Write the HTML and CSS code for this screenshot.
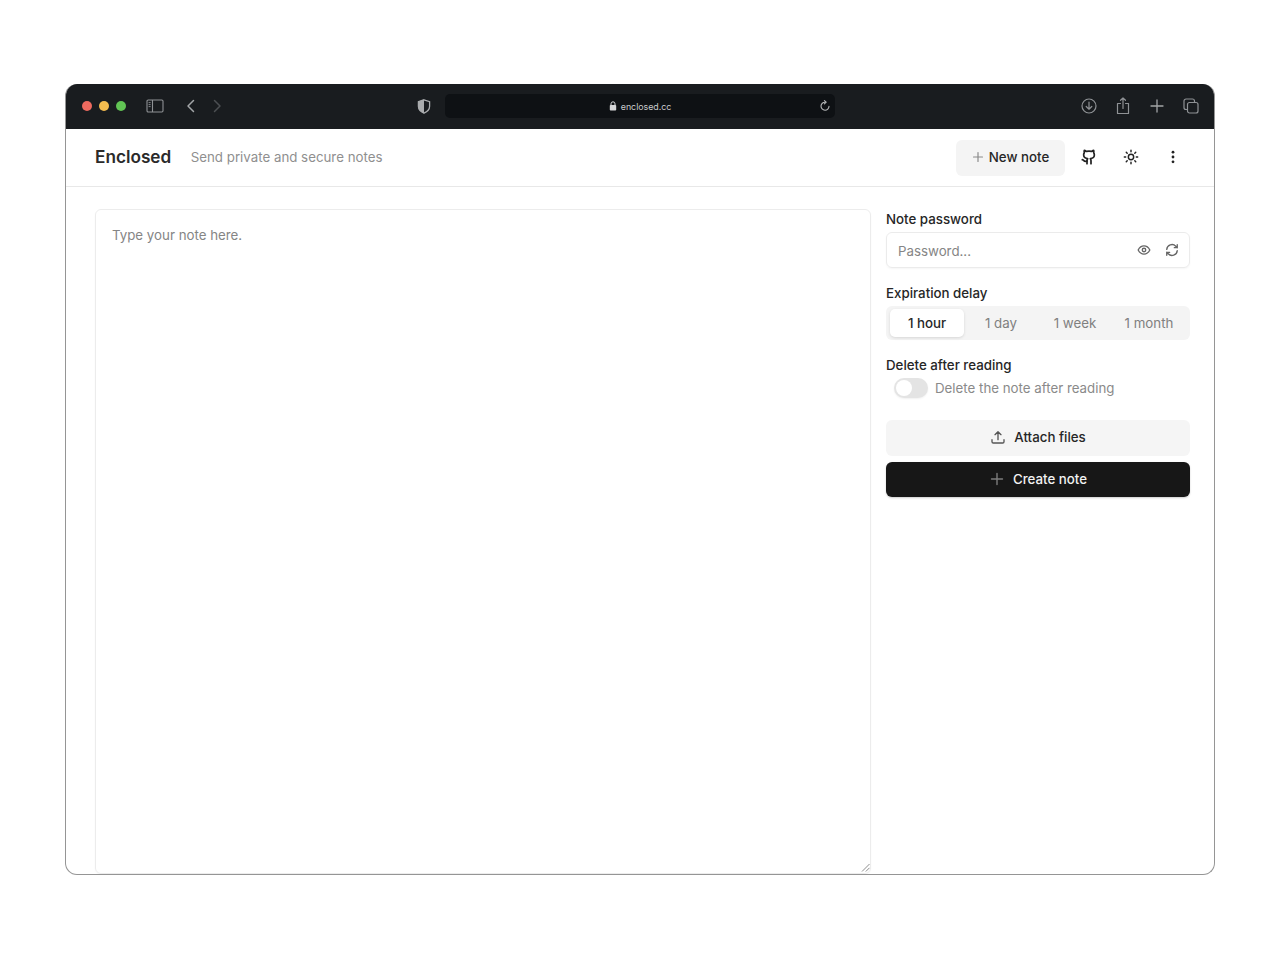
FILE: index.html
```html
<!DOCTYPE html>
<html lang="en">
<head>
<meta charset="utf-8">
<title>Enclosed</title>
<link rel="stylesheet" href="styles.css">
</head>
<body>
<div class="window">
  <div class="chrome">
    <div class="lights"><span class="light red"></span><span class="light yellow"></span><span class="light green"></span></div>
    <svg class="ci sidebar-ic" width="18" height="14" viewBox="0 0 18 14" fill="none" stroke="#8f9295" stroke-width="1.1"><rect x="1" y="1" width="16" height="12" rx="1.2"/><path d="M6.5 1v12"/><path d="M2.6 3.6h2M2.6 5.6h2M2.6 7.6h2" stroke-width=".9"/></svg>
    <svg class="ci back-ic" width="10" height="14" viewBox="0 0 10 14" fill="none" stroke="#a2a5a7" stroke-width="1.5" stroke-linecap="round" stroke-linejoin="round"><path d="M7.5 1.5 2 7l5.5 5.5"/></svg>
    <svg class="ci fwd-ic" width="10" height="14" viewBox="0 0 10 14" fill="none" stroke="#4c4f52" stroke-width="1.5" stroke-linecap="round" stroke-linejoin="round"><path d="M2.5 1.5 8 7l-5.5 5.5"/></svg>
    <svg class="ci shield-ic" width="14" height="15" viewBox="0 0 14 15"><path d="M7 .8 12.6 2.6v4.6c0 3.2-2.3 5.500-5.600 7C3.700 12.700 1.400 10.400 1.400 7.200V2.600z" fill="none" stroke="#a9abad" stroke-width="1.300"/><path d="M7 .8 1.400 2.600v4.600c0 3.200 2.300 5.500 5.600 7z" fill="#a9abad"/></svg>
    <div class="address">
      <span class="addr-center">
        <svg width="8" height="10" viewBox="0 0 8 10"><path d="M2 4.200V2.800a2 2 0 0 1 4 0v1.400" fill="none" stroke="#d6d7d8" stroke-width="1"/><rect x=".8" y="4" width="6.400" height="5.500" rx=".8" fill="#d6d7d8"/></svg>
        <span class="url">enclosed.cc</span>
      </span>
      <svg class="reload" width="12" height="12" viewBox="0 0 12 12" fill="none" stroke="#b5b7b8" stroke-width="1.100" stroke-linecap="round" stroke-linejoin="round"><path d="M6.200 2.200A4 4 0 1 0 10 6.200"/><path d="M5.400.6 7.200 2.200 5.400 3.800"/></svg>
    </div>
    <div class="chrome-right">
      <svg width="16" height="16" viewBox="0 0 16 16" fill="none" stroke="#8f9295" stroke-width="1.200" stroke-linecap="round" stroke-linejoin="round"><circle cx="8" cy="8" r="7"/><path d="M8 4v7M5.200 8.500 8 11.200l2.800-2.700"/></svg>
      <svg width="14" height="18" viewBox="0 0 14 18" fill="none" stroke="#8f9295" stroke-width="1.200" stroke-linecap="round" stroke-linejoin="round"><path d="M4.500 6.500H1.500v10h11v-10H9.500"/><path d="M7 11.500V1M4.500 3.300 7 1l2.500 2.300"/></svg>
      <svg width="14" height="14" viewBox="0 0 14 14" fill="none" stroke="#a2a5a7" stroke-width="1.300" stroke-linecap="round"><path d="M7 1v12M1 7h12"/></svg>
      <svg width="16" height="16" viewBox="0 0 16 16" fill="none" stroke="#8f9295" stroke-width="1.200" stroke-linejoin="round"><rect x="4.500" y="4.500" width="10.500" height="10.500" rx="2"/><path d="M11.500 4.500V3a2 2 0 0 0-2-2H3a2 2 0 0 0-2 2v6.500a2 2 0 0 0 2 2h1.500"/></svg>
    </div>
  </div>
  <header class="navbar">
    <div class="brand"><span class="logo">Enclosed</span><span class="tagline">Send private and secure notes</span></div>
    <div class="nav-actions">
      <button class="btn new-note"><svg width="12" height="12" viewBox="0 0 12 12" fill="none" stroke="#8a8a8a" stroke-width="1.200" stroke-linecap="round"><path d="M6 1.500v9M1.500 6h9"/></svg>New note</button>
      <span class="nav-icon github"><svg width="16" height="16" viewBox="0 0 24 24" fill="none" stroke="#222" stroke-width="2.600" stroke-linecap="round" stroke-linejoin="round"><path d="M15 22v-4a4.800 4.800 0 0 0-1-3.500c3 0 6-2 6-5.500.08-1.250-.27-2.480-1-3.500.28-1.150.28-2.350 0-3.500 0 0-1 0-3 1.500-2.640-.5-5.360-.5-8 0C6 2 5 2 5 2c-.3 1.150-.3 2.350 0 3.500A5.400 5.400 0 0 0 4 9c0 3.500 3 5.500 6 5.500-.39.490-.68 1.050-.85 1.650-.17.600-.22 1.230-.15 1.850v4"/><path d="M9 18c-4.510 2-5-2-7-2"/></svg></span>
      <span class="nav-icon"><svg width="16" height="16" viewBox="0 0 24 24" fill="none" stroke="#222" stroke-width="2.200" stroke-linecap="round"><circle cx="12" cy="12" r="4"/><path d="M12 2v2M12 20v2M4.900 4.900l1.400 1.400M17.700 17.700l1.400 1.400M2 12h2M20 12h2M4.900 19.100l1.400-1.400M17.700 6.300l1.400-1.400"/></svg></span>
      <span class="nav-icon"><svg width="16" height="16" viewBox="0 0 16 16" fill="#222"><circle cx="8" cy="3.200" r="1.400"/><circle cx="8" cy="8" r="1.400"/><circle cx="8" cy="12.800" r="1.400"/></svg></span>
    </div>
  </header>
  <main class="content">
    <div class="note">
      <span class="note-placeholder">Type your note here.</span>
      <svg class="grip" width="9" height="9" viewBox="0 0 9 9" fill="none" stroke="#8e8e8e" stroke-width="1"><path d="M1 8.500 8.500 1M4.800 8.500 8.500 4.800"/></svg>
    </div>
    <aside class="panel">
      <div class="field">
        <div class="label">Note password</div>
        <div class="input">
          <span class="placeholder">Password...</span>
          <span class="input-icons">
            <svg width="14" height="14" viewBox="0 0 24 24" fill="none" stroke="#666" stroke-width="2.300" stroke-linecap="round" stroke-linejoin="round"><path d="M2 12s3.600-7 10-7 10 7 10 7-3.600 7-10 7-10-7-10-7z"/><circle cx="12" cy="12" r="3"/></svg>
            <svg width="14" height="14" viewBox="0 0 24 24" fill="none" stroke="#666" stroke-width="2.300" stroke-linecap="round" stroke-linejoin="round"><path d="M3 11a9 9 0 0 1 15.500-5.500L21 8M21 3v5h-5"/><path d="M21 13a9 9 0 0 1-15.500 5.500L3 16M3 21v-5h5"/></svg>
          </span>
        </div>
      </div>
      <div class="field">
        <div class="label">Expiration delay</div>
        <div class="segments">
          <span class="segment active">1 hour</span>
          <span class="segment">1 day</span>
          <span class="segment">1 week</span>
          <span class="segment">1 month</span>
        </div>
      </div>
      <div class="field">
        <div class="label tight">Delete after reading</div>
        <div class="toggle-row">
          <span class="switch"><span class="knob"></span></span>
          <span class="toggle-text">Delete the note after reading</span>
        </div>
      </div>
      <div class="buttons">
        <button class="btn wide attach"><svg width="16" height="16" viewBox="0 0 24 24" fill="none" stroke="#555" stroke-width="2" stroke-linecap="round" stroke-linejoin="round"><path d="M12 16V4M7.500 8.500 12 4l4.500 4.500"/><path d="M3 16v3a2 2 0 0 0 2 2h14a2 2 0 0 0 2-2v-3"/></svg>Attach files</button>
        <button class="btn wide create"><svg width="14" height="14" viewBox="0 0 14 14" fill="none" stroke="#7d7d7d" stroke-width="1.400" stroke-linecap="round"><path d="M7 1.500v11M1.500 7h11"/></svg>Create note</button>
      </div>
    </aside>
  </main>
</div>
</body>
</html>
```

FILE: styles.css
```css
* { box-sizing: border-box; }
html, body { margin: 0; height: 100%; background: #fff; }
body {
  padding: 84px 65px 0;
  font-family: Inter, "Liberation Sans", sans-serif;
  font-size: 13.3px;
  color: #1f1f1f;
  overflow: hidden;
}
.window {
  width: 1150px;
  height: 791px;
  border: 1px solid #959595;
  border-top: 0;
  border-radius: 12px;
  overflow: hidden;
  display: flex;
  flex-direction: column;
  background: #fff;
}
.chrome {
  height: 45px;
  margin: 0 -1px;
  flex: none;
  background: #191c1f;
  display: flex;
  align-items: center;
  padding: 0 16px 1px 17px;
}
.lights { display: flex; gap: 7px; }
.light { width: 10px; height: 10px; border-radius: 50%; }
.red { background: #ee6a5f; }
.yellow { background: #f5bd4f; }
.green { background: #61c454; }
.ci { flex: none; }
.sidebar-ic { margin-left: 20px; }
.back-ic { margin-left: 22px; }
.fwd-ic { margin-left: 16px; }
.shield-ic { margin-left: 195px; }
.address {
  margin-left: 14px;
  width: 390px;
  height: 24px;
  background: #0e1114;
  border-radius: 5px;
  position: relative;
  display: flex;
  align-items: center;
  justify-content: center;
}
.addr-center { display: flex; align-items: center; gap: 4px; }
.url { font-size: 8.9px; color: #c9cacb; letter-spacing: -.05px; }
.reload { position: absolute; right: 4px; top: 6px; }
.chrome-right {
  margin-left: auto;
  display: flex;
  align-items: center;
  gap: 19.5px;
}
.navbar {
  height: 58px;
  flex: none;
  border-bottom: 1px solid #e8e8e8;
  padding: 0 20px 2px 29px;
  display: flex;
  align-items: center;
  justify-content: space-between;
}
.brand { display: flex; align-items: center; gap: 19.5px; }
.logo { font-size: 17.2px; font-weight: 600; color: #2a2a2a; }
.tagline { font-size: 13.3px; color: #8f8f8f; margin-top: 1px; }
.nav-actions { display: flex; align-items: center; }
.btn {
  font: inherit;
  border: 0;
  border-radius: 6px;
  display: flex;
  align-items: center;
  justify-content: center;
  font-weight: 500;
}
.new-note {
  width: 109px;
  height: 36px;
  background: #f4f4f4;
  color: #262626;
  gap: 5px;
  margin: 2px 3px 0 0;
  padding-bottom: 2px;
}
.nav-icon { width: 42px; height: 36px; display: flex; align-items: center; justify-content: center; }
.content {
  flex: 1;
  min-height: 0;
  display: flex;
  gap: 15px;
  padding: 22px 24px 0 29px;
}
.note {
  width: 777px;
  border: 1px solid #ececec;
  border-radius: 6px;
  padding: 16px;
  position: relative;
  box-shadow: 0 1px 2px rgba(0,0,0,.03);
}
.note-placeholder { color: #858585; line-height: 18px; display: block; }
.grip { position: absolute; right: 0; bottom: 1px; }
.panel { width: 304px; display: flex; flex-direction: column; }
.field { margin-bottom: 15px; }
.label { font-weight: 500; line-height: 20px; margin-bottom: 3px; color: #262626; }
.label.tight { margin-bottom: 0; }
.input {
  height: 36px;
  border: 1px solid #ebebeb;
  border-radius: 6px;
  padding: 0 10px 0 11px;
  display: flex;
  align-items: center;
  justify-content: space-between;
  box-shadow: 0 1px 2px rgba(0,0,0,.04);
}
.placeholder { color: #858585; margin-top: 1px; }
.input-icons { display: flex; gap: 14px; }
.segments {
  height: 34px;
  background: #f4f4f4;
  border-radius: 6px;
  padding: 3px 4px;
  display: grid;
  grid-template-columns: repeat(4, 74px);
}
.segment { display: flex; align-items: center; justify-content: center; color: #808080; border-radius: 5px; }
.segment.active { background: #fff; color: #262626; font-weight: 500; box-shadow: 0 1px 3px rgba(0,0,0,.12); }
.toggle-row { display: flex; align-items: center; gap: 7px; padding-left: 8px; margin-top: 3px; }
.switch { width: 34px; height: 20px; border-radius: 10px; background: #e4e4e4; padding: 2px; display: block; box-shadow: 0 1px 2px rgba(0,0,0,.06); }
.knob { width: 16px; height: 16px; border-radius: 50%; background: #fff; display: block; }
.toggle-text { color: #8a8a8a; }
.buttons { display: flex; flex-direction: column; gap: 6px; margin-top: 7px; }
.wide { width: 100%; }
.attach { height: 36px; background: #f5f5f5; color: #262626; gap: 8px; padding: 0 6px 3px; }
.create { height: 35px; background: #171717; color: #f2f2f2; gap: 9px; padding: 0 6px 2px 7px; box-shadow: 0 1px 2px rgba(0,0,0,.2); }
```
